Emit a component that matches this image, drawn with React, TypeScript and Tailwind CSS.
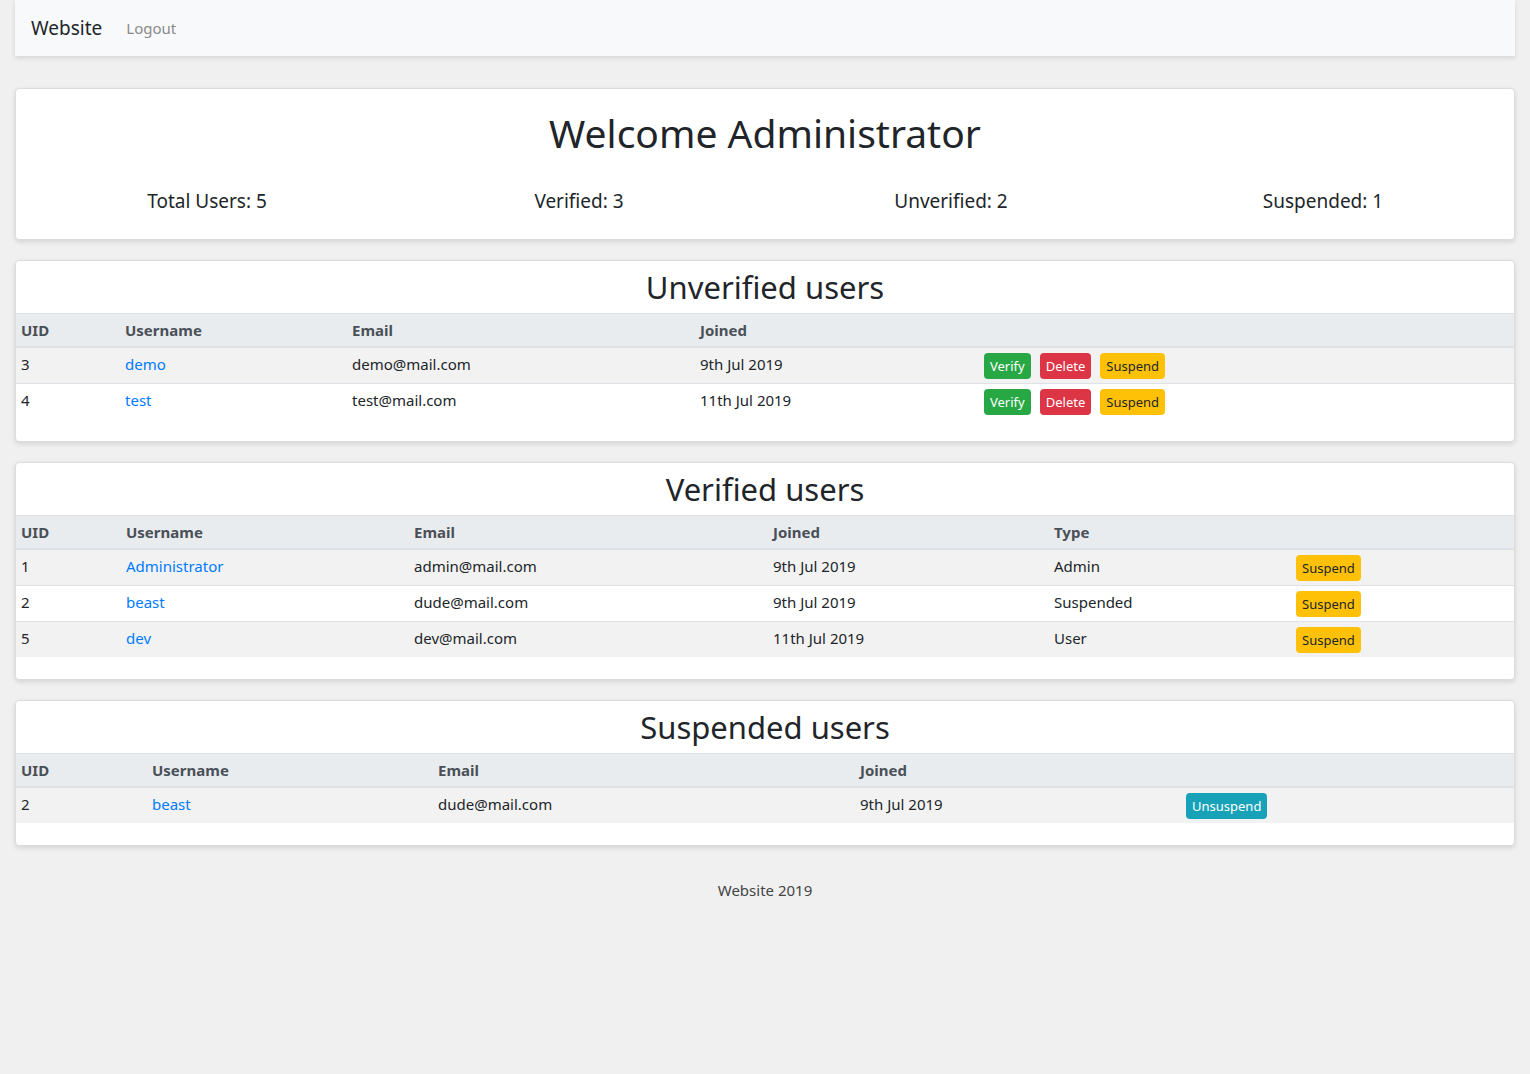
import React from "react";

const font = { fontFamily: '"Noto Sans", "Open Sans", sans-serif' };

type Btn = { label: string; cls: string };

const verify: Btn = { label: "Verify", cls: "bg-[#28a745] text-white" };
const del: Btn = { label: "Delete", cls: "bg-[#dc3545] text-white" };
const suspend: Btn = { label: "Suspend", cls: "bg-[#ffc107] text-[#212529]" };
const unsuspend: Btn = { label: "Unsuspend", cls: "bg-[#17a2b8] text-white" };

function Button({ b }: { b: Btn }) {
  return (
    <span
      className={`inline-flex h-[26px] items-center rounded-[4px] px-[6px] text-[13px] leading-none ${b.cls}`}
    >
      {b.label}
    </span>
  );
}

type Cell = string | { link: string } | { btns: Btn[] };

function renderCell(c: Cell) {
  if (typeof c === "string") return <span>{c}</span>;
  if ("link" in c) return <span className="text-[#007bff]">{c.link}</span>;
  return (
    <div className="flex gap-[9px]">
      {c.btns.map((b, i) => (
        <Button key={i} b={b} />
      ))}
    </div>
  );
}

function Table({
  cols,
  head,
  rows,
}: {
  cols: string;
  head: string[];
  rows: Cell[][];
}) {
  return (
    <div className="text-[15px]">
      <div
        className={`grid ${cols} h-[35px] border-t border-b-2 border-[#dee2e6] bg-[#e9ecef] font-bold text-[#495057]`}
      >
        {head.map((h, i) => (
          <div key={i} className="px-[5px] pt-[4px] leading-6">
            {h}
          </div>
        ))}
      </div>
      {rows.map((r, ri) => (
        <div
          key={ri}
          className={`grid ${cols} ${ri === 0 ? "h-[35px]" : "h-[36px] border-t border-[#dee2e6]"} ${
            ri % 2 === 0 ? "bg-[#f2f2f2]" : "bg-white"
          } text-[#212529]`}
        >
          {r.map((c, ci) => (
            <div
              key={ci}
              className={`px-[5px] leading-6 ${
                typeof c === "object" && "btns" in c ? "pt-[5px]" : "pt-[4px]"
              }`}
            >
              {renderCell(c)}
            </div>
          ))}
        </div>
      ))}
    </div>
  );
}

function Card({ title, children }: { title: string; children: React.ReactNode }) {
  return (
    <div className="rounded-[4px] border border-[#dcdcdc] bg-white pb-[22px] shadow-[0_2px_5px_rgba(0,0,0,0.12)]">
      <div className="flex h-[52px] items-center justify-center pt-[1px] text-[31px] text-[#212529]">
        {title}
      </div>
      {children}
    </div>
  );
}

export default function App() {
  return (
    <div className="min-h-[1074px] bg-[#f0f0f0]" style={font}>
      <div className="px-[15px]">
        <nav className="flex h-[56px] items-center bg-[#f8f9fa] px-[16px] shadow-[0_2px_5px_rgba(0,0,0,0.12)]">
          <span className="mr-[16px] text-[19px] text-[#212529]">Website</span>
          <span className="px-[8px] text-[15px] text-[#8a8a8a]">Logout</span>
        </nav>

        <div className="mt-[32px] flex flex-col gap-[20px]">
          <div className="rounded-[4px] border border-[#dcdcdc] bg-white px-[5px] pb-[26px] pt-[20px] shadow-[0_2px_5px_rgba(0,0,0,0.12)]">
            <h1 className="text-center text-[39px] leading-[48px] text-[#212529]">
              Welcome Administrator
            </h1>
            <div className="mt-[32px] grid grid-cols-4 text-center text-[19px] leading-6 text-[#212529]">
              <div>Total Users: 5</div>
              <div>Verified: 3</div>
              <div>Unverified: 2</div>
              <div>Suspended: 1</div>
            </div>
          </div>

          <Card title="Unverified users">
            <Table
              cols="grid-cols-[104px_227px_348px_284px_1fr]"
              head={["UID", "Username", "Email", "Joined", ""]}
              rows={[
                ["3", { link: "demo" }, "demo@mail.com", "9th Jul 2019", { btns: [verify, del, suspend] }],
                ["4", { link: "test" }, "test@mail.com", "11th Jul 2019", { btns: [verify, del, suspend] }],
              ]}
            />
          </Card>

          <Card title="Verified users">
            <Table
              cols="grid-cols-[105px_288px_359px_281px_242px_1fr]"
              head={["UID", "Username", "Email", "Joined", "Type", ""]}
              rows={[
                ["1", { link: "Administrator" }, "admin@mail.com", "9th Jul 2019", "Admin", { btns: [suspend] }],
                ["2", { link: "beast" }, "dude@mail.com", "9th Jul 2019", "Suspended", { btns: [suspend] }],
                ["5", { link: "dev" }, "dev@mail.com", "11th Jul 2019", "User", { btns: [suspend] }],
              ]}
            />
          </Card>

          <Card title="Suspended users">
            <Table
              cols="grid-cols-[131px_286px_422px_326px_1fr]"
              head={["UID", "Username", "Email", "Joined", ""]}
              rows={[["2", { link: "beast" }, "dude@mail.com", "9th Jul 2019", { btns: [unsuspend] }]]}
            />
          </Card>
        </div>

        <div className="mt-[32px] text-center text-[15px] leading-6 text-[#444]">Website 2019</div>
      </div>
    </div>
  );
}
